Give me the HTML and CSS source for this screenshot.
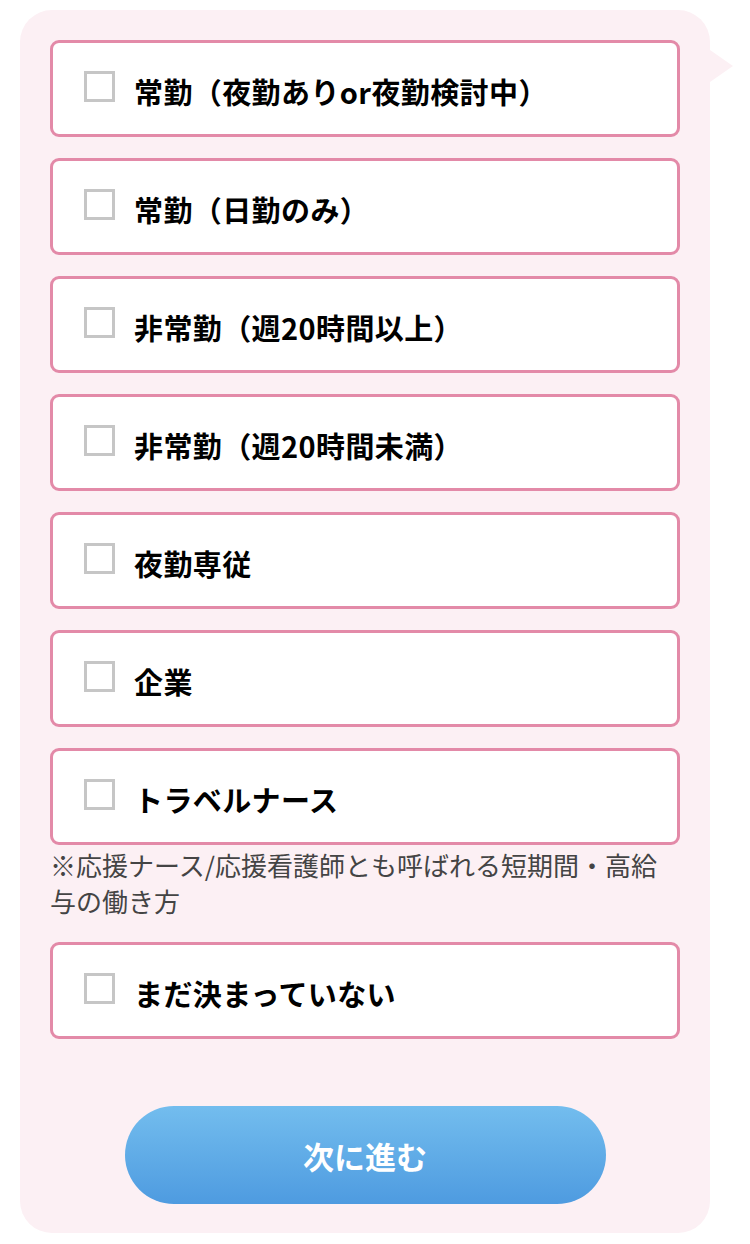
FILE: index.html
```html
<!DOCTYPE html>
<html lang="ja">
<head>
    <meta charset="UTF-8">
    <meta name="viewport" content="width=device-width, initial-scale=1.0">
    <title>働き方の選択</title>
    <link rel="stylesheet" href="styles.css">
</head>
<body>
    <div class="bubble">
        <label class="option"><span class="check"></span>常勤（夜勤ありor夜勤検討中）</label>
        <label class="option"><span class="check"></span>常勤（日勤のみ）</label>
        <label class="option"><span class="check"></span>非常勤（週20時間以上）</label>
        <label class="option"><span class="check"></span>非常勤（週20時間未満）</label>
        <label class="option"><span class="check"></span>夜勤専従</label>
        <label class="option"><span class="check"></span>企業</label>
        <label class="option"><span class="check"></span>トラベルナース</label>
        <p class="note">※応援ナース/応援看護師とも呼ばれる短期間・高給与の働き方</p>
        <label class="option"><span class="check"></span>まだ決まっていない</label>
        <button class="next">次に進む</button>
    </div>
</body>
</html>
```

FILE: styles.css
```css
body {
    margin: 0;
    background: #fff;
    font-family: "Noto Sans CJK JP", "Noto Sans", sans-serif;
    color: #000;
}
.bubble {
    position: relative;
    margin: 10px 40px 10px 20px;
    padding: 30px;
    background: #fcf0f4;
    border-radius: 32px;
    display: flex;
    flex-direction: column;
    gap: 21px;
}
.bubble::after {
    content: "";
    position: absolute;
    right: -23px;
    top: 40px;
    border-top: 16px solid transparent;
    border-bottom: 16px solid transparent;
    border-left: 23px solid #fcf0f4;
}
.option {
    height: 97px;
    box-sizing: border-box;
    border: 3px solid #e38aa8;
    border-radius: 9px;
    background: #fff;
    display: flex;
    align-items: center;
    padding-left: 31px;
    padding-top: 4px;
    font-size: 29px;
    font-weight: bold;
    letter-spacing: 0.4px;
    cursor: pointer;
}
.check {
    width: 31px;
    height: 31px;
    box-sizing: border-box;
    border: 3px solid #c6c6c6;
    background: #fff;
    margin-right: 19px;
    margin-top: -8px;
    flex-shrink: 0;
}
.note {
    margin: -19px 0 2px;
    font-size: 26px;
    line-height: 36px;
    color: #444;
}
.next {
    align-self: center;
    width: 481px;
    height: 98px;
    margin-top: 46px;
    margin-bottom: -1px;
    border: none;
    border-radius: 49px;
    background: linear-gradient(to bottom, #73bdee, #4e9be0);
    color: #fff;
    font-family: inherit;
    font-size: 31px;
    font-weight: bold;
    cursor: pointer;
}
```
